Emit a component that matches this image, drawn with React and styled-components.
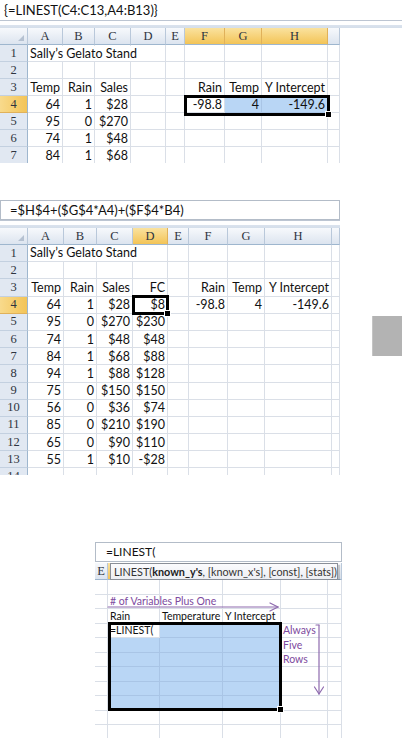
import React from 'react'
import styled, { createGlobalStyle } from 'styled-components'

const GlobalStyle = createGlobalStyle`
  html, body {
    margin: 0;
    padding: 0;
    background: #fff;
  }
  body {
    width: 402px;
    height: 738px;
    overflow: hidden;
    font-family: Lato, "Liberation Sans", sans-serif;
  }
`

const HEAD_H = 17
const LETTERS = ['', 'A', 'B', 'C', 'D', 'E', 'F', 'G', 'H', 'I', 'J']
const TOP_COLS = [28, 35, 32, 36, 35, 19, 40, 37, 66, 12]
const MID_COLS = [28, 36, 33, 36, 35, 21, 39, 37, 67, 8]

const Page = styled.div`
  width: 402px;
  height: 738px;
  display: flex;
  flex-direction: column;
`

const FormulaLine = styled.div`
  height: 20px;
  line-height: 21px;
  padding-left: 4px;
  font-size: 13px;
  color: #111;
`

const FormulaBox = styled.div`
  box-sizing: border-box;
  height: 20px;
  border: 1px solid #b3bcc8;
  padding-left: ${p => p.$pad || 9}px;
  font-size: ${p => p.$size || 13}px;
  line-height: 18px;
  color: #111;
  background: #fff;
`

const Band = styled.div`
  height: ${p => p.$h}px;
  border-top: 1px solid #bcc5d2;
  background: linear-gradient(#fff 0%, #fff 55%, #dbe3ee 56%, #d4deea 100%);
  box-sizing: border-box;
`

const SheetFrame = styled.div`
  position: relative;
  width: 340px;
  height: ${p => p.$h}px;
  overflow: hidden;
  display: grid;
  grid-template-columns: ${p => p.$cols};
  grid-template-rows: ${HEAD_H}px;
  grid-auto-rows: ${p => p.$rowH}px;
  align-content: start;
`

const headerBg = p =>
  p.$active
    ? 'linear-gradient(#fae29f, #f3c457)'
    : 'linear-gradient(#f7f9fc, #dce4ef)'

const ColHead = styled.div`
  box-sizing: border-box;
  background: ${headerBg};
  border-right: 1px solid ${p => (p.$active ? '#e0b15a' : '#b9c8da')};
  border-bottom: 1px solid #9eb6ce;
  display: flex;
  align-items: center;
  justify-content: center;
  font-family: "Liberation Serif", serif;
  font-size: 12.5px;
  color: #2e3440;
  overflow: hidden;
`

const Corner = styled(ColHead)`
  position: relative;
  &::after {
    content: '';
    position: absolute;
    right: 3px;
    bottom: 3px;
    border-left: 6px solid transparent;
    border-bottom: 6px solid #b5c1d1;
  }
`

const RowHead = styled.div`
  box-sizing: border-box;
  background: ${p => (p.$active ? 'linear-gradient(90deg, #f8da8c, #f3c457)' : '#e1e8f2')};
  border-right: 1px solid #9eb6ce;
  border-bottom: 1px solid ${p => (p.$active ? '#e0b15a' : '#c3d0e0')};
  display: flex;
  align-items: center;
  justify-content: center;
  font-family: "Liberation Serif", serif;
  font-size: 12.5px;
  color: #2e3440;
`

const Cell = styled.div`
  box-sizing: border-box;
  position: relative;
  z-index: ${p => (p.$over ? 2 : 'auto')};
  border-right: 1px solid ${p => (p.$fill ? '#a9c5e6' : '#dadfe7')};
  border-bottom: 1px solid ${p => (p.$fill ? '#a9c5e6' : '#dadfe7')};
  background: ${p => (p.$fill ? '#b9d6f5' : '#fff')};
  display: flex;
  align-items: center;
  justify-content: ${p => (p.$over ? 'flex-start' : 'flex-end')};
  padding: 0 2px;
  font-size: ${p => p.$size || 12.5}px;
  color: #111;
  white-space: nowrap;
  overflow: ${p => (p.$over ? 'visible' : 'hidden')};
`

const Overflow = styled.span`
  background: ${p => p.$bg || '#fff'};
  color: ${p => p.$color || 'inherit'};
  padding-right: 2px;
  line-height: ${p => p.$lh}px;
`

const Selection = styled.div`
  position: absolute;
  box-sizing: border-box;
  border: 3px solid #000;
  pointer-events: none;
  z-index: 3;
  &::after {
    content: '';
    position: absolute;
    right: -5px;
    bottom: -5px;
    width: 5px;
    height: 5px;
    background: #000;
    border: 1px solid #fff;
  }
`

function Sheet({ cols, rowH, height, activeCols, activeRow, data, fills = [], sel }) {
  const template = cols.map(w => `${w}px`).join(' ')
  const nRows = Math.ceil((height - HEAD_H) / rowH)
  return (
    <SheetFrame $cols={template} $rowH={rowH} $h={height}>
      <Corner />
      {LETTERS.slice(1, cols.length).map((l, i) => (
        <ColHead key={l} $active={activeCols.includes(l)}>
          {cols[i + 1] >= 15 ? l : ''}
        </ColHead>
      ))}
      {Array.from({ length: nRows }, (_, i) => {
        const r = i + 1
        const row = data[r] || []
        return (
          <React.Fragment key={r}>
            <RowHead $active={r === activeRow}>{r}</RowHead>
            {cols.slice(1).map((_, c) => {
              const v = row[c]
              const over = v && typeof v === 'object'
              const name = `${LETTERS[c + 1]}${r}`
              return (
                <Cell key={name} $fill={fills.includes(name)} $over={over}>
                  {over ? <Overflow $lh={rowH - 2}>{v.t}</Overflow> : v}
                </Cell>
              )
            })}
          </React.Fragment>
        )
      })}
      {sel && <Selection style={{ left: sel.x, top: sel.y, width: sel.w, height: sel.h }} />}
    </SheetFrame>
  )
}

const TITLE = { t: 'Sally\u2019s Gelato Stand' }

const topData = {
  1: [TITLE],
  3: ['Temp', 'Rain', 'Sales', '', '', 'Rain', 'Temp', 'Y Intercept'],
  4: ['64', '1', '$28', '', '', '-98.8', '4', '-149.6'],
  5: ['95', '0', '$270'],
  6: ['74', '1', '$48'],
  7: ['84', '1', '$68'],
}

const midRows = [
  ['64', '1', '$28', '$8'],
  ['95', '0', '$270', '$230'],
  ['74', '1', '$48', '$48'],
  ['84', '1', '$68', '$88'],
  ['94', '1', '$88', '$128'],
  ['75', '0', '$150', '$150'],
  ['56', '0', '$36', '$74'],
  ['85', '0', '$210', '$190'],
  ['65', '0', '$90', '$110'],
  ['55', '1', '$10', '-$28'],
]

const midData = {
  1: [TITLE],
  3: ['Temp', 'Rain', 'Sales', 'FC', '', 'Rain', 'Temp', 'Y Intercept'],
}
midRows.forEach((r, i) => {
  midData[i + 4] = i === 0 ? [...r, '', '-98.8', '4', '-149.6'] : r
})

const Middle = styled.div`
  display: flex;
  margin-top: 37px;
`

const MidSheetCol = styled.div`
  width: 340px;
  display: flex;
  flex-direction: column;
`

const GrayBlock = styled.div`
  width: 30px;
  height: 40px;
  margin: 116px 0 0 32px;
  background: #b3b3b3;
  border-left: 1px solid #c4c4c4;
`

/* ---------- bottom: LINEST entry ---------- */

const BOT_COLS = [13, 52, 63, 58, 47, 14]
const BOT_ROW = 14.5
const PURPLE = '#7d4a9e'

const Bottom = styled.div`
  margin: 67px 0 0 95px;
  width: 247px;
  display: flex;
  flex-direction: column;
`

const HeadStrip = styled.div`
  position: relative;
  margin-top: 1px;
  height: ${HEAD_H}px;
  display: grid;
  grid-template-columns: ${BOT_COLS.map(w => `${w}px`).join(' ')};
`

const Tooltip = styled.div`
  position: absolute;
  left: 15px;
  top: 0;
  width: 228px;
  height: 17px;
  box-sizing: border-box;
  background: linear-gradient(#fbfbfd, #eceef3);
  border: 1px solid #8a8f98;
  box-shadow: 2px 2px 1px rgba(0, 0, 0, 0.18);
  font-size: 10.8px;
  line-height: 15px;
  padding-left: 3px;
  color: #333;
  white-space: nowrap;
  overflow: hidden;
  b {
    font-weight: 700;
    color: #222;
  }
`

const BotGrid = styled.div`
  position: relative;
  height: 158px;
  overflow: hidden;
  display: grid;
  grid-template-columns: ${BOT_COLS.map(w => `${w}px`).join(' ')};
  grid-auto-rows: ${BOT_ROW}px;
  align-content: start;
`

const BotCell = styled(Cell)`
  justify-content: flex-start;
  padding: 0 2px;
  font-size: 10.5px;
  color: ${p => p.$color || '#111'};
  overflow: visible;
  z-index: ${p => (p.$over ? 2 : 'auto')};
`

const Arrows = styled.svg`
  position: absolute;
  left: 0;
  top: 0;
  z-index: 4;
  pointer-events: none;
`

const botData = {
  1: { 1: { t: '# of Variables Plus One', color: PURPLE, over: true } },
  2: { 1: { t: 'Rain' }, 2: { t: 'Temperature' }, 3: { t: 'Y Intercept', over: true } },
  3: { 1: { t: '=LINEST(', white: true }, 4: { t: 'Always', color: PURPLE } },
  4: { 4: { t: 'Five', color: PURPLE } },
  5: { 4: { t: 'Rows', color: PURPLE } },
}

function BottomGrid() {
  return (
    <BotGrid>
      {Array.from({ length: 11 }, (_, r) =>
        BOT_COLS.map((_, c) => {
          const v = (botData[r] || {})[c]
          const inSel = r >= 3 && r <= 8 && c >= 1 && c <= 3
          const fill = inSel && !(v && v.white)
          return (
            <BotCell key={`${r}-${c}`} $fill={fill} $over={v && v.over} $color={v && v.color}>
              {v ? v.t : null}
            </BotCell>
          )
        })
      )}
      <Selection style={{ left: 13, top: 42, width: 174, height: 89 }} />
      <Arrows width="247" height="158" viewBox="0 0 247 158">
        <g stroke="#8e6aae" strokeWidth="1.2" fill="none" strokeLinecap="round">
          <line x1="13" y1="27" x2="183" y2="27" />
          <polyline points="175,23 183,27 175,31" />
          <line x1="224" y1="45" x2="224" y2="114" />
          <line x1="221" y1="45" x2="224" y2="45" />
          <polyline points="219.5,107 224,114 228.5,107" />
        </g>
      </Arrows>
    </BotGrid>
  )
}

export default function App() {
  return (
    <Page>
      <GlobalStyle />
      <FormulaLine>{'{=LINEST(C4:C13,A4:B13)}'}</FormulaLine>
      <Band $h={8} />
      <Sheet
        cols={TOP_COLS}
        rowH={17}
        height={135}
        activeCols={['F', 'G', 'H']}
        activeRow={4}
        data={topData}
        fills={['G4', 'H4']}
        sel={{ x: 184, y: 67, w: 146, h: 21 }}
      />

      <Middle>
        <MidSheetCol>
          <FormulaBox>=$H$4+($G$4*A4)+($F$4*B4)</FormulaBox>
          <Band $h={8} />
          <Sheet
            cols={MID_COLS}
            rowH={17.2}
            height={247}
            activeCols={['D']}
            activeRow={4}
            data={midData}
            sel={{ x: 132, y: 67, w: 37, h: 20 }}
          />
        </MidSheetCol>
        <GrayBlock />
      </Middle>

      <Bottom>
        <FormulaBox $pad={10} $size={12}>=LINEST(</FormulaBox>
        <HeadStrip>
          {BOT_COLS.map((_, c) => (
            <ColHead key={c} $active={c >= 1 && c <= 3}>{c === 0 ? 'E' : ''}</ColHead>
          ))}
          <Tooltip>
            LINEST(<b>known_y's</b>, [known_x's], [const], [stats])
          </Tooltip>
        </HeadStrip>
        <BottomGrid />
      </Bottom>
    </Page>
  )
}
